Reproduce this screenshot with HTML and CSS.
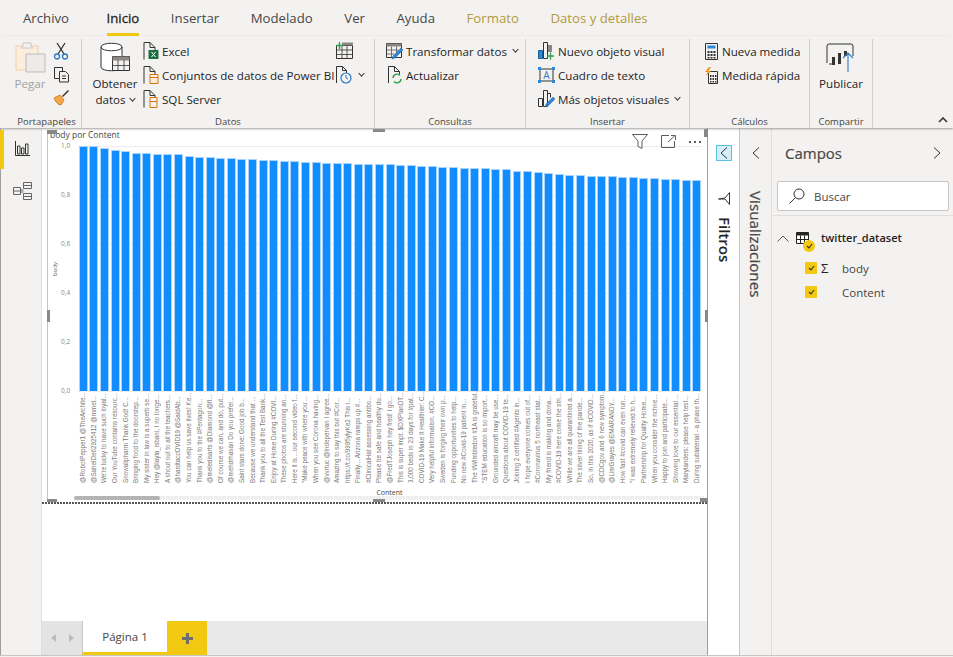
FILE: index.html
```html
<!DOCTYPE html>
<html lang="es">
<head>
    <meta charset="UTF-8">
    <title>Power BI Desktop</title>
    <link rel="stylesheet" href="styles.css">
</head>
<body>
<div class="app">
    <div class="tabs">
        <span class="tab file">Archivo</span>
        <span class="tab active">Inicio</span>
        <span class="tab">Insertar</span>
        <span class="tab">Modelado</span>
        <span class="tab">Ver</span>
        <span class="tab">Ayuda</span>
        <span class="tab ctx">Formato</span>
        <span class="tab ctx">Datos y detalles</span>
    </div>

    <div class="ribbon">
        <div class="group g-clip">
            <div class="group-body">
                <div class="big pegar">
                    <svg width="34" height="32" viewBox="0 0 34 32"><path d="M3 5h22v24H3z" fill="#fbeedd" stroke="#f0cfa5"/><path d="M10 5V2h8v3l2 2H8z" fill="#f3f2f1" stroke="#c8c6c4"/><path d="M13 13h19v18H13z" fill="#edebe9" stroke="#bdbbb9"/></svg>
                    <span>Pegar</span>
                </div>
                <div class="mini-col">
                    <svg width="16" height="18" viewBox="0 0 16 18"><path d="M4 1l7 11M12 1L5 12" fill="none" stroke="#333" stroke-width="1.3"/><circle cx="4" cy="14.500" r="2.500" fill="none" stroke="#2b79c2" stroke-width="1.300"/><circle cx="12" cy="14.500" r="2.500" fill="none" stroke="#2b79c2" stroke-width="1.300"/></svg>
                    <svg width="17" height="17" viewBox="0 0 17 17"><path d="M1.500 1.500h8v11h-8z" fill="#f3f2f1" stroke="#333"/><path d="M6.500 5.500h6l3 3v7.500h-9z" fill="#f3f2f1" stroke="#333"/><path d="M9 10h4M9 12.500h4" stroke="#333"/></svg>
                    <svg width="17" height="17" viewBox="0 0 17 17"><path d="M1 9l6-3 4 5-3 5-3-1-1-2-1 0z" fill="#f6a94a" stroke="#c9701b" stroke-width=".8"/><path d="M9 7l6-6 1 1-6 6z" fill="#333"/></svg>
                </div>
            </div>
            <div class="group-name">Portapapeles</div>
        </div>

        <div class="group g-data">
            <div class="group-body">
                <div class="big obtener">
                    <svg width="31" height="30" viewBox="0 0 31 30"><path d="M1 5c0-5 21-5 21 0v20c0 5-21 5-21 0z" fill="#fff" stroke="#333"/><path d="M1 5c0 5 21 5 21 0" fill="none" stroke="#333"/><path d="M12.500 14.500h17v14h-17z" fill="#f3f2f1" stroke="#333"/><path d="M12.500 14.500h17v4h-17z" fill="#8a8886"/><path d="M18 18v10M24 18v10M13 23.500h16" stroke="#333" stroke-width=".8"/></svg>
                    <span>Obtener</span>
                    <span>datos <i class="caret"></i></span>
                </div>
                <div class="rows">
                    <div class="row">
                        <svg width="16" height="18" viewBox="0 0 16 18"><path d="M.5 17.500V.5h6l5 5v3" fill="none" stroke="#333"/><path d="M6.500.5v5h5" fill="none" stroke="#333"/><path d="M5 8h10v9H5z" fill="#1d6f42"/><path d="M8 10l4 5M12 10l-4 5" stroke="#fff"/></svg>
                        <span>Excel</span>
                    </div>
                    <div class="row">
                        <svg width="16" height="18" viewBox="0 0 16 18"><path d="M.5 17.500V.5h6l5 5v3" fill="none" stroke="#333"/><path d="M6.500.5v5h5" fill="none" stroke="#333"/><path d="M6.500 8.500h8v9h-8z" fill="#fbeedd" stroke="#d9730d"/><path d="M6.500 11.500h8" stroke="#d9730d"/></svg>
                        <span>Conjuntos de datos de Power BI</span>
                    </div>
                    <div class="row">
                        <svg width="16" height="18" viewBox="0 0 16 18"><path d="M.5 17.500V.5h6l5 5v3" fill="none" stroke="#333"/><path d="M6.500.5v5h5" fill="none" stroke="#333"/><path d="M6.500 7.500h7v10h-7z" fill="#f3f2f1" stroke="#d9730d"/><path d="M6.500 11.500h7" stroke="#d9730d"/></svg>
                        <span>SQL Server</span>
                    </div>
                </div>
                <div class="mini-col extra">
                    <svg width="17" height="17" viewBox="0 0 17 17"><path d="M.5 3.500h16v13H.5z" fill="#f3f2f1" stroke="#333"/><path d="M6 3.500v13M11 3.500v13M.5 8h16M.5 12.500h16" stroke="#333" stroke-width=".8"/><path d="M6 .5h11v3H6z" fill="#8a8886"/><path d="M0 3.500h7M3.500 0v7" stroke="#2e9e49" stroke-width="1.400"/></svg>
                    <div class="with-caret">
                        <svg width="17" height="18" viewBox="0 0 17 18"><path d="M.5 17V.5h6l4 4v3" fill="none" stroke="#333"/><path d="M6.500.5v4h4" fill="none" stroke="#333"/><circle cx="10" cy="12" r="5" fill="#f3f2f1" stroke="#2b79c2" stroke-width="1.200"/><path d="M10 9v3l2 1" fill="none" stroke="#2b79c2"/></svg>
                        <i class="caret"></i>
                    </div>
                </div>
            </div>
            <div class="group-name">Datos</div>
        </div>

        <div class="group g-query">
            <div class="group-body">
                <div class="rows">
                    <div class="row">
                        <svg width="17" height="18" viewBox="0 0 17 18"><path d="M.5 1.500h15v14H.5z" fill="#f3f2f1" stroke="#333"/><path d="M.5 1.500h15v3H.5z" fill="#8a8886"/><path d="M5.500 4.500v11M10.500 4.500v6M.5 8h12M.5 12h8" stroke="#555" stroke-width=".8"/><path d="M6 17l1-3 8-8 2 2-8 8z" fill="#2b88d8" stroke="#1f5f99" stroke-width=".5"/></svg>
                        <span>Transformar datos</span><i class="caret"></i>
                    </div>
                    <div class="row">
                        <svg width="17" height="18" viewBox="0 0 17 18"><path d="M2.500 17V.5h6l5 5v3" fill="none" stroke="#333"/><path d="M8.500.5v5h5" fill="none" stroke="#333"/><path d="M7 12a4 4 0 0 1 7-2.500M15 13a4 4 0 0 1-7 2.500" fill="none" stroke="#2e9e49" stroke-width="1.400"/></svg>
                        <span>Actualizar</span>
                    </div>
                </div>
            </div>
            <div class="group-name">Consultas</div>
        </div>

        <div class="group g-insert">
            <div class="group-body">
                <div class="rows">
                    <div class="row">
                        <svg width="17" height="18" viewBox="0 0 17 18"><path d="M.5 8.500h4v8h-4z" fill="#2b88d8" stroke="#1f5f99"/><path d="M5.500.5h4v16h-4z" fill="#f3f2f1" stroke="#333"/><path d="M10 3h4v7h-4z" fill="#8a8886"/><path d="M9 14h7M12.500 10.500v7" stroke="#2e9e49" stroke-width="1.300"/></svg>
                        <span>Nuevo objeto visual</span>
                    </div>
                    <div class="row">
                        <svg width="17" height="16" viewBox="0 0 17 16"><path d="M2 2h13v12H2z" fill="#f3f2f1" stroke="#333"/><path d="M0 0h3v3H0zM14 0h3v3h-3zM0 13h3v3H0zM14 13h3v3h-3z" fill="#2b88d8"/><text class="svg-a" x="8.500" y="11.500">A</text></svg>
                        <span>Cuadro de texto</span>
                    </div>
                    <div class="row">
                        <svg width="17" height="18" viewBox="0 0 17 18"><path d="M.5 8.500h4v8h-4z" fill="#f3f2f1" stroke="#333"/><path d="M5.500.5h4v16h-4z" fill="#f3f2f1" stroke="#333"/><path d="M9.500 3.500h3v4" fill="none" stroke="#333"/><path d="M7 17l1-3 7-7 2 2-7 7z" fill="#2b88d8" stroke="#1f5f99" stroke-width=".5"/></svg>
                        <span>Más objetos visuales</span><i class="caret"></i>
                    </div>
                </div>
            </div>
            <div class="group-name">Insertar</div>
        </div>

        <div class="group g-calc">
            <div class="group-body">
                <div class="rows">
                    <div class="row">
                        <svg width="13" height="17" viewBox="0 0 13 17"><path d="M.5.5h12v16H.5z" fill="#f3f2f1" stroke="#333"/><path d="M2.500 2.500h8v3h-8z" fill="#2b88d8"/><path d="M2.500 8h2v2h-2zM5.500 8h2v2h-2zM8.500 8h2v2h-2zM2.500 11h2v2h-2zM5.500 11h2v2h-2zM8.500 11h2v2h-2zM2.500 14h2v1.500h-2zM5.500 14h2v1.500h-2zM8.500 14h2v1.500h-2z" fill="#333"/></svg>
                        <span>Nueva medida</span>
                    </div>
                    <div class="row">
                        <svg width="13" height="17" viewBox="0 0 13 17"><path d="M3.500 4.500h9v12h-9z" fill="#f3f2f1" stroke="#333"/><path d="M5 8h1.500v2H5zM7.500 8H9v2H7.500zM10 8h1.500v2H10zM5 11h1.500v2H5zM7.500 11H9v2H7.500zM10 11h1.500v2H10zM5 14h1.500v1.500H5zM7.500 14H9v1.500H7.500zM10 14h1.500v1.500H10z" fill="#333"/><path d="M4 0L0 5h2.500L1 9l5-5H3.500L6 0z" fill="#f7941d"/></svg>
                        <span>Medida rápida</span>
                    </div>
                </div>
            </div>
            <div class="group-name">Cálculos</div>
        </div>

        <div class="group g-share">
            <div class="group-body">
                <div class="big publicar">
                    <svg width="30" height="30" viewBox="0 0 30 30"><path d="M1 18V3q0-2 2-2h22q2 0 2 2v10M1 18v2M6 21h-3" fill="none" stroke="#333"/><path d="M6 14h3v8H6zM12 10h3v11h-3zM18 8h3v5h-3z" fill="#333"/><path d="M22 29V10M17 15l5-5 5 5" fill="none" stroke="#2b79c2" stroke-width="1.100"/></svg>
                    <span>Publicar</span>
                </div>
            </div>
            <div class="group-name">Compartir</div>
        </div>

        <div class="ribbon-end">
            <svg width="10" height="6" viewBox="0 0 10 6"><path d="M1 5l4-4 4 4" fill="none" stroke="#333" stroke-width="1.600"/></svg>
        </div>
    </div>

    <div class="main">
        <div class="rail">
            <div class="rail-item on">
                <svg width="15" height="15" viewBox="0 0 15 15"><path d="M.5 0v14.500H15" fill="none" stroke="#333"/><path d="M2.500 5h2.500v8H2.500zM6.500 7H9v6H6.500zM10.500 3H13v10h-2.500z" fill="none" stroke="#333"/></svg>
            </div>
            <div class="rail-item">
                <svg width="19" height="18" viewBox="0 0 19 18"><path d="M.5 5.500h7v7h-7zM10.500.5h8v6h-8zM10.500 11.500h8v6h-8z" fill="none" stroke="#666"/><path d="M7.500 8h3M7.500 10h3" stroke="#666"/><path d="M10.500 3.500h8M10.500 14.500h8M.5 9h7" stroke="#666"/></svg>
            </div>
        </div>

        <div class="center">
            <div class="canvas">
                <div class="visual">
                    <div class="vis-title">body por Content</div>
                    <div class="chart">
                        <div class="y-name"><span>body</span></div>
                        <div class="y-axis">
                            <span>1,0</span><span>0,8</span><span>0,6</span><span>0,4</span><span>0,2</span><span>0,0</span>
                        </div>
                        <div class="plot">
                            <div class="col"><div class="slot"><div class="bar" style="height:100%"></div></div><span class="lbl">@RobotPepper1 @TheArchite...</span></div>
                            <div class="col"><div class="slot"><div class="bar" style="height:100%"></div></div><span class="lbl">@SahelDe62925412 @mmel...</span></div>
                            <div class="col"><div class="slot"><div class="bar" style="height:99.2%"></div></div><span class="lbl">We're lucky to have such loyal...</span></div>
                            <div class="col"><div class="slot"><div class="bar" style="height:98.2%"></div></div><span class="lbl">Our YouTube contains resourc...</span></div>
                            <div class="col"><div class="slot"><div class="bar" style="height:98.1%"></div></div><span class="lbl">Snowalipharm Thank God! C...</span></div>
                            <div class="col"><div class="slot"><div class="bar" style="height:97.1%"></div></div><span class="lbl">Bringing food to the doorstep...</span></div>
                            <div class="col"><div class="slot"><div class="bar" style="height:97%"></div></div><span class="lbl">My sister in law is a superb se...</span></div>
                            <div class="col"><div class="slot"><div class="bar" style="height:96.9%"></div></div><span class="lbl">Hey @layla_isbani, I no longe...</span></div>
                            <div class="col"><div class="slot"><div class="bar" style="height:96.8%"></div></div><span class="lbl">A shout out to all the teachers...</span></div>
                            <div class="col"><div class="slot"><div class="bar" style="height:96.8%"></div></div><span class="lbl">@hardtaccOVID19 @SaidAb...</span></div>
                            <div class="col"><div class="slot"><div class="bar" style="height:96%"></div></div><span class="lbl">You can help us save lives! Ke...</span></div>
                            <div class="col"><div class="slot"><div class="bar" style="height:95.7%"></div></div><span class="lbl">Thank you to the #Pentagon...</span></div>
                            <div class="col"><div class="slot"><div class="bar" style="height:95.4%"></div></div><span class="lbl">@meledisarts @Diamond @fl...</span></div>
                            <div class="col"><div class="slot"><div class="bar" style="height:95.2%"></div></div><span class="lbl">Of course we can, and do, put...</span></div>
                            <div class="col"><div class="slot"><div class="bar" style="height:95%"></div></div><span class="lbl">@mehdrhasan Do you prefer...</span></div>
                            <div class="col"><div class="slot"><div class="bar" style="height:94.8%"></div></div><span class="lbl">Saint stars done: Good job b...</span></div>
                            <div class="col"><div class="slot"><div class="bar" style="height:94.6%"></div></div><span class="lbl">Because we understand that ...</span></div>
                            <div class="col"><div class="slot"><div class="bar" style="height:94.4%"></div></div><span class="lbl">Thank you to all the Test Bank...</span></div>
                            <div class="col"><div class="slot"><div class="bar" style="height:94.2%"></div></div><span class="lbl">Enjoy at Home During #COVI...</span></div>
                            <div class="col"><div class="slot"><div class="bar" style="height:94%"></div></div><span class="lbl">These photos are stunning an...</span></div>
                            <div class="col"><div class="slot"><div class="bar" style="height:93.8%"></div></div><span class="lbl">Here it is....our second video f...</span></div>
                            <div class="col"><div class="slot"><div class="bar" style="height:93.6%"></div></div><span class="lbl">"Make peace with where you ...</span></div>
                            <div class="col"><div class="slot"><div class="bar" style="height:93.4%"></div></div><span class="lbl">When you see Corona having...</span></div>
                            <div class="col"><div class="slot"><div class="bar" style="height:93.2%"></div></div><span class="lbl">@vvrtuc @Indepervan I agree...</span></div>
                            <div class="col"><div class="slot"><div class="bar" style="height:93%"></div></div><span class="lbl">Amazing to say this but #Cor...</span></div>
                            <div class="col"><div class="slot"><div class="bar" style="height:92.9%"></div></div><span class="lbl">https://t.co/9995ylyKe2 This i...</span></div>
                            <div class="col"><div class="slot"><div class="bar" style="height:92.8%"></div></div><span class="lbl">Finally....Arizona ramps up #...</span></div>
                            <div class="col"><div class="slot"><div class="bar" style="height:92.7%"></div></div><span class="lbl">#ClinicalHat assessing antibo...</span></div>
                            <div class="col"><div class="slot"><div class="bar" style="height:92.6%"></div></div><span class="lbl">Please be safe and healthy du...</span></div>
                            <div class="col"><div class="slot"><div class="bar" style="height:92.5%"></div></div><span class="lbl">@FredTJoseph hey fred! I go...</span></div>
                            <div class="col"><div class="slot"><div class="bar" style="height:92.4%"></div></div><span class="lbl">This is super impt. $DXPlanDT...</span></div>
                            <div class="col"><div class="slot"><div class="bar" style="height:92.2%"></div></div><span class="lbl">3,000 beds in 23 days for #pat...</span></div>
                            <div class="col"><div class="slot"><div class="bar" style="height:92%"></div></div><span class="lbl">COVID-19 Make It Healthier: C...</span></div>
                            <div class="col"><div class="slot"><div class="bar" style="height:91.8%"></div></div><span class="lbl">Very helpful information. #CO...</span></div>
                            <div class="col"><div class="slot"><div class="bar" style="height:91.6%"></div></div><span class="lbl">Sweden is forging their own p...</span></div>
                            <div class="col"><div class="slot"><div class="bar" style="height:91.4%"></div></div><span class="lbl">Funding opportunities to help...</span></div>
                            <div class="col"><div class="slot"><div class="bar" style="height:91.2%"></div></div><span class="lbl">No new #Covid-19 patient in...</span></div>
                            <div class="col"><div class="slot"><div class="bar" style="height:91.1%"></div></div><span class="lbl">The #Wimbledon #1A is grateful...</span></div>
                            <div class="col"><div class="slot"><div class="bar" style="height:91%"></div></div><span class="lbl">"STEM education is so import...</span></div>
                            <div class="col"><div class="slot"><div class="bar" style="height:90.8%"></div></div><span class="lbl">Grounded aircraft may be use...</span></div>
                            <div class="col"><div class="slot"><div class="bar" style="height:90.6%"></div></div><span class="lbl">Questions about COVID-19 te...</span></div>
                            <div class="col"><div class="slot"><div class="bar" style="height:90%"></div></div><span class="lbl">Joining 2 certified #Agents in...</span></div>
                            <div class="col"><div class="slot"><div class="bar" style="height:89.6%"></div></div><span class="lbl">I hope everyone comes out of...</span></div>
                            <div class="col"><div class="slot"><div class="bar" style="height:89.2%"></div></div><span class="lbl">#Coronavirus 5 northeast stat...</span></div>
                            <div class="col"><div class="slot"><div class="bar" style="height:88.8%"></div></div><span class="lbl">My friend is making and dona...</span></div>
                            <div class="col"><div class="slot"><div class="bar" style="height:88.5%"></div></div><span class="lbl">#COVID-19 here come the stri...</span></div>
                            <div class="col"><div class="slot"><div class="bar" style="height:88.2%"></div></div><span class="lbl">While we are all quarantined a...</span></div>
                            <div class="col"><div class="slot"><div class="bar" style="height:88%"></div></div><span class="lbl">The silver lining of the pande...</span></div>
                            <div class="col"><div class="slot"><div class="bar" style="height:87.8%"></div></div><span class="lbl">So, in this 2020, as if #COVID...</span></div>
                            <div class="col"><div class="slot"><div class="bar" style="height:87.7%"></div></div><span class="lbl">@CDCgov and 6 new symptom...</span></div>
                            <div class="col"><div class="slot"><div class="bar" style="height:87.6%"></div></div><span class="lbl">@LimGrayes @EMARANDY...</span></div>
                            <div class="col"><div class="slot"><div class="bar" style="height:87.5%"></div></div><span class="lbl">How fast #covid can even run...</span></div>
                            <div class="col"><div class="slot"><div class="bar" style="height:87.2%"></div></div><span class="lbl">"I was extremely relieved to h...</span></div>
                            <div class="col"><div class="slot"><div class="bar" style="height:87%"></div></div><span class="lbl">Partnership for Quality Home...</span></div>
                            <div class="col"><div class="slot"><div class="bar" style="height:86.8%"></div></div><span class="lbl">When you consider the richne...</span></div>
                            <div class="col"><div class="slot"><div class="bar" style="height:86.6%"></div></div><span class="lbl">Happy to join and participate...</span></div>
                            <div class="col"><div class="slot"><div class="bar" style="height:86.4%"></div></div><span class="lbl">Showing love to our essential ...</span></div>
                            <div class="col"><div class="slot"><div class="bar" style="height:86.2%"></div></div><span class="lbl">Marylanders: please help test...</span></div>
                            <div class="col"><div class="slot"><div class="bar" style="height:86%"></div></div><span class="lbl">During sublaterial - a phase th...</span></div>
                        </div>
                    </div>
                    <div class="x-name">Content</div>
                    <div class="scroll"><div class="thumb"></div></div>

                    <div class="vis-tools">
                        <svg width="16" height="15" viewBox="0 0 16 15"><path d="M.5.5h15L10 7v7.500L6 12.500V7z" fill="none" stroke="#605e5c"/></svg>
                        <svg width="15" height="13" viewBox="0 0 15 13"><path d="M8 .5H.5v12h13V6" fill="none" stroke="#605e5c"/><path d="M7 7l7-6.500M10 .5h4.500V5" fill="none" stroke="#605e5c"/></svg>
                        <span class="dots"><i></i><i></i><i></i></span>
                    </div>
                    <i class="hd h-tl"></i><i class="hd h-tr"></i><i class="hd h-bl"></i><i class="hd h-br"></i>
                    <i class="hd h-t"></i><i class="hd h-b"></i><i class="hd h-l"></i><i class="hd h-r"></i>
                </div>
                <div class="sel-line"></div>
            </div>
            <div class="pages">
                <div class="page-nav">
                    <i class="tri left"></i><i class="tri right"></i>
                </div>
                <div class="page-tab">Página 1</div>
                <div class="page-add"><span class="plus"></span></div>
            </div>
        </div>

        <div class="filters">
            <div class="collapse-btn">
                <svg width="8" height="12" viewBox="0 0 8 12"><path d="M7 .5L1 6l6 5.500" fill="none" stroke="#333"/></svg>
            </div>
            <svg class="funnel" width="12" height="13" viewBox="0 0 12 13"><path d="M11.500.5v12L7 7H.5L7 6z" fill="none" stroke="#333"/></svg>
            <div class="side-title strong">Filtros</div>
        </div>

        <div class="viz">
            <svg width="8" height="12" viewBox="0 0 8 12"><path d="M7 .5L1 6l6 5.500" fill="none" stroke="#333"/></svg>
            <div class="side-title">Visualizaciones</div>
        </div>

        <div class="fields">
            <div class="fields-head">
                <span>Campos</span>
                <svg width="8" height="12" viewBox="0 0 8 12"><path d="M1 .5L7 6l-6 5.500" fill="none" stroke="#333"/></svg>
            </div>
            <div class="search">
                <svg width="16" height="16" viewBox="0 0 16 16"><circle cx="10" cy="6" r="5" fill="none" stroke="#333"/><path d="M6.500 9.500L.5 15.500" stroke="#333"/></svg>
                <span>Buscar</span>
            </div>
            <div class="tree">
                <div class="tree-head">
                    <svg width="12" height="7" viewBox="0 0 12 7"><path d="M.5 6.500L6 1l5.500 5.500" fill="none" stroke="#605e5c"/></svg>
                    <span class="tbl-icon">
                        <svg width="13" height="12" viewBox="0 0 13 12"><path d="M.5.5h12v11H.5z" fill="#fff" stroke="#252423"/><path d="M.5.5h12v3H.5z" fill="#252423"/><path d="M4.500 3.500v8M8.500 3.500v8M.5 7.500h12" stroke="#252423"/></svg>
                        <i class="badge"><svg width="7" height="6" viewBox="0 0 7 6"><path d="M1 3l2 2 3-4" fill="none" stroke="#333" stroke-width="1.100"/></svg></i>
                    </span>
                    <b>twitter_dataset</b>
                </div>
                <div class="field">
                    <i class="check"><svg width="7" height="6" viewBox="0 0 7 6"><path d="M1 3l2 2 3-4" fill="none" stroke="#333" stroke-width="1.100"/></svg></i>
                    <span class="sigma">Σ</span>
                    <span>body</span>
                </div>
                <div class="field">
                    <i class="check"><svg width="7" height="6" viewBox="0 0 7 6"><path d="M1 3l2 2 3-4" fill="none" stroke="#333" stroke-width="1.100"/></svg></i>
                    <span class="sigma"></span>
                    <span>Content</span>
                </div>
            </div>
        </div>
    </div>
    <div class="status"></div>
</div>
</body>
</html>
```

FILE: styles.css
```css
*{
    margin:0;
    padding:0;
    box-sizing:border-box;
}
body,html{
    height:100%;
    overflow:hidden;
}
body{
    font-family:"Open Sans","Noto Sans","Liberation Sans",sans-serif;
    color:#252423;
    background:#f3f2f1;
}
i{
    font-style:normal;
    display:block;
}
svg{
    display:block;
    flex:none;
}
.app{
    height:657px;
    display:flex;
    flex-direction:column;
}

/* tabs */
.tabs{
    height:36px;
    display:flex;
    padding-left:23px;
    gap:31.600px;
    font-size:13.200px;
    flex:none;
}
.tab{
    height:36px;
    line-height:37px;
    color:#484644;
}
.tab.file{
    margin-right:6px;
}
.tab.active{
    color:#252423;
    -webkit-text-stroke:.3px #252423;
    border-bottom:3px solid #f2c811;
}
.tab.ctx{
    color:#b39a3c;
}

/* ribbon */
.ribbon{
    height:92px;
    flex:none;
    display:flex;
    font-size:11.600px;
    color:#252423;
    position:relative;
    z-index:2;
    box-shadow:0 1px 2px #a19f9d;
    padding-left:12px;
}
.group{
    display:flex;
    flex-direction:column;
    margin-top:3px;
    border-right:1px solid #d2d0ce;
}
.group-body{
    flex:1;
    display:flex;
}
.group-name{
    height:13px;
    line-height:13px;
    text-align:center;
    font-size:9.500px;
    color:#484644;
}
.g-clip{
    width:70px;
}
.g-data{
    width:293px;
}
.g-query{
    width:151px;
}
.g-insert{
    width:164px;
}
.g-calc{
    width:120px;
}
.g-share{
    width:63px;
}
.big{
    display:flex;
    flex-direction:column;
    align-items:center;
    line-height:16px;
}
.big span{
    white-space:nowrap;
}
.big span .caret{
    display:inline-block;
    vertical-align:3px;
    margin-left:1px;
}
.pegar{
    width:36px;
    padding-top:2px;
    color:#a19f9d;
    gap:3px;
}
.obtener{
    width:50px;
    margin:0 3px 0 8px;
    padding-top:3px;
}
.obtener svg{
    margin-bottom:4px;
}
.publicar{
    width:100%;
    padding-top:4px;
    gap:3px;
}
.mini-col{
    display:flex;
    flex-direction:column;
    align-items:center;
    width:20px;
    gap:6px;
    padding-top:3px;
    margin-left:3px;
}
.mini-col.extra{
    gap:7px;
    padding-top:3px;
    width:34px;
    margin-left:1px;
    align-items:flex-start;
}
.with-caret{
    display:flex;
    align-items:center;
    gap:3px;
}
.caret{
    width:5px;
    height:5px;
    border-right:1px solid #333;
    border-bottom:1px solid #333;
    transform:rotate(45deg) scale(.9);
    margin-left:3px;
    margin-top:-3px;
}
.rows{
    display:flex;
    flex-direction:column;
}
.row{
    height:24px;
    display:flex;
    align-items:center;
    gap:3px;
    white-space:nowrap;
}
.row svg{
    width:17px;
}
.g-data .rows{
    width:192px;
}
.g-data .row{
    gap:2px;
}
.g-query .rows{
    padding-left:11px;
}
.g-insert .rows{
    padding-left:12px;
}
.g-calc .rows{
    padding-left:13px;
}
.g-calc .row{
    gap:2px;
}
.svg-a{
    font-size:10px;
    text-anchor:middle;
    fill:#2b79c2;
}
.ribbon-end{
    flex:1;
    display:flex;
    justify-content:flex-end;
    align-items:flex-end;
    padding:0 5px 5px 0;
}

/* main area */
.main{
    flex:1;
    min-height:0;
    display:flex;
}
.rail{
    width:42px;
    flex:none;
    border-right:1px solid #e1dfdd;
    border-left:1px solid #a19f9d;
    padding-top:2px;
}
.rail-item{
    height:42px;
    display:flex;
    align-items:center;
    justify-content:center;
    margin-left:-1px;
    padding-left:3px;
}
.rail-item.on{
    height:39px;
    border-left:4px solid #f2c811;
    padding:0 0 3px;
    margin-bottom:1px;
}
.center{
    flex:none;
    width:666px;
    display:flex;
    flex-direction:column;
    border-right:1px solid #a19f9d;
}
.canvas{
    flex:1;
    background:#fff;
    padding:2px 0 0 5px;
    min-height:0;
}

/* the selected visual */
.visual{
    height:372px;
    position:relative;
    border-left:1px solid #c8c6c4;
    display:flex;
    flex-direction:column;
}
.vis-title{
    height:12px;
    font-size:8.500px;
    line-height:10px;
    padding-left:2px;
    color:#484644;
    flex:none;
}
.chart{
    display:flex;
    height:348px;
    flex:none;
    padding-top:4px;
}
.y-name{
    width:13px;
    height:245px;
    display:flex;
    align-items:center;
    justify-content:center;
    font-size:6px;
    color:#605e5c;
    flex:none;
}
.y-name span{
    writing-mode:vertical-rl;
    transform:rotate(180deg);
}
.y-axis{
    width:17px;
    height:245px;
    flex:none;
    display:flex;
    flex-direction:column;
    justify-content:space-between;
    font-size:6.500px;
    color:#8a8886;
    line-height:0;
}
.y-axis span{
    height:0;
}
.plot{
    width:624px;
    flex:none;
    display:flex;
    background:repeating-linear-gradient(to bottom,#ececec 0,#ececec 1px,transparent 1px,transparent 49px) 0 0/100% 246px no-repeat;
}
.col{
    flex:1;
    min-width:0;
    display:flex;
    flex-direction:column;
    align-items:center;
}
.slot{
    width:100%;
    height:245px;
    flex:none;
    display:flex;
    align-items:flex-end;
    padding:0 .8px;
}
.bar{
    width:100%;
    background:#118dff;
    border:1px solid #a8d4ff;
    border-width:1px .5px 0;
}
.lbl{
    height:88px;
    margin-top:4px;
    writing-mode:vertical-rl;
    transform:rotate(180deg);
    white-space:nowrap;
    font-family:"Liberation Sans",sans-serif;
    font-size:6.300px;
    line-height:10px;
    color:#797775;
}
.x-name{
    text-align:center;
    font-size:7px;
    line-height:6px;
    color:#484644;
    padding-left:24px;
}
.scroll{
    height:4px;
    margin:0 3px 0 26px;
    background:#f0f0f0;
}
.thumb{
    width:86px;
    height:4px;
    background:#b3b3b3;
    border-radius:2px;
}
.vis-tools{
    position:absolute;
    right:6px;
    top:4px;
    display:flex;
    align-items:center;
    gap:13px;
}
.dots{
    display:flex;
    gap:3px;
}
.dots i{
    width:2px;
    height:2px;
    background:#605e5c;
}
.hd{
    position:absolute;
    background:#8a8886;
}
.h-tl{
    left:-1px;
    top:0;
    width:10px;
    height:4px;
}
.h-tr{
    right:-1px;
    top:-1px;
    width:4px;
    height:8px;
}
.h-bl{
    left:-1px;
    bottom:0;
    width:10px;
    height:3px;
}
.h-br{
    right:-1px;
    bottom:0;
    width:8px;
    height:4px;
}
.h-t{
    left:325px;
    top:-1px;
    width:12px;
    height:3px;
}
.h-b{
    left:325px;
    bottom:0;
    width:12px;
    height:3px;
}
.h-l{
    left:-1px;
    top:180px;
    width:3px;
    height:12px;
}
.h-r{
    right:-1px;
    top:180px;
    width:3px;
    height:12px;
}
.sel-line{
    height:2px;
    margin-left:-5px;
    background:repeating-linear-gradient(to right,#555 0,#555 2px,transparent 2px,transparent 3px);
}

/* page tabs */
.pages{
    height:34px;
    flex:none;
    display:flex;
    background:#e9e9e9;
}
.page-nav{
    width:40px;
    background:#e3e3e3;
    display:flex;
    align-items:center;
    justify-content:center;
    gap:13px;
}
.tri{
    width:0;
    height:0;
    border-top:4px solid transparent;
    border-bottom:4px solid transparent;
}
.tri.left{
    border-right:5px solid #bdbbb9;
}
.tri.right{
    border-left:5px solid #bdbbb9;
}
.page-tab{
    width:85px;
    background:#fff;
    border-bottom:3px solid #f2c811;
    border-left:1px solid #c8c6c4;
    text-align:center;
    font-size:11.500px;
    line-height:32px;
    color:#484644;
}
.page-add{
    width:40px;
    background:#f2c811;
    display:flex;
    align-items:center;
    justify-content:center;
}
.plus{
    width:11px;
    height:11px;
    background:linear-gradient(#706e6c,#706e6c) center/11px 3px no-repeat,linear-gradient(#706e6c,#706e6c) center/3px 11px no-repeat;
}

/* side panes */
.filters{
    width:32px;
    flex:none;
    background:#fff;
    border-right:1px solid #c8c6c4;
    display:flex;
    flex-direction:column;
    align-items:center;
    padding-top:17px;
}
.collapse-btn{
    width:16px;
    height:16px;
    background:#d5eefa;
    border:1px solid #5bc0de;
    display:flex;
    align-items:center;
    justify-content:center;
}
.funnel{
    margin-top:31px;
    margin-bottom:12px;
}
.side-title{
    writing-mode:vertical-rl;
    font-size:14px;
    line-height:16px;
    color:#252423;
    white-space:nowrap;
}
.side-title.strong{
    font-size:15px;
    font-weight:600;
    margin-left:2px;
}
.viz{
    width:32px;
    flex:none;
    border-right:1px solid #e1dfdd;
    display:flex;
    flex-direction:column;
    align-items:center;
    padding-top:19px;
    gap:32px;
}
.viz .side-title{
    font-size:15.200px;
    color:#484644;
    -webkit-text-stroke:.2px #484644;
}
.fields{
    flex:1;
    min-width:0;
}
.fields-head{
    height:53px;
    display:flex;
    align-items:center;
    justify-content:space-between;
    padding:0 12px 4px 13px;
    font-size:15px;
    color:#484644;
    -webkit-text-stroke:.2px #484644;
}
.search{
    height:30px;
    margin:0 4px 0 5px;
    background:#fff;
    border:1px solid #c8c6c4;
    border-radius:2px;
    display:flex;
    align-items:center;
    gap:9px;
    padding-left:11px;
    font-size:11.500px;
    color:#484644;
}
.tree{
    margin-top:4px;
    border-top:1px solid #e1dfdd;
    padding-top:10px;
    font-size:11.500px;
}
.tree-head{
    height:24px;
    display:flex;
    align-items:center;
    padding-left:5px;
}
.tree-head b{
    font-size:11px;
    font-weight:600;
    margin-left:6px;
    margin-top:-1px;
}
.tbl-icon{
    position:relative;
    margin-left:7px;
    margin-right:6px;
}
.badge{
    position:absolute;
    left:7px;
    top:8px;
    width:12px;
    height:12px;
    border-radius:50%;
    background:#f2c811;
    display:flex;
    align-items:center;
    justify-content:center;
}
.field{
    height:24px;
    display:flex;
    align-items:center;
    padding-left:33px;
    color:#484644;
}
.tree-head + .field{
    margin-top:6px;
}
.check{
    width:12px;
    height:12px;
    border-radius:1px;
    background:#f2c811;
    display:flex;
    align-items:center;
    justify-content:center;
}
.sigma{
    width:25px;
    padding-left:4px;
    color:#252423;
    font-size:13px;
    line-height:14px;
}
.status{
    height:2px;
    flex:none;
    border-top:1px solid #c8c6c4;
}
```
